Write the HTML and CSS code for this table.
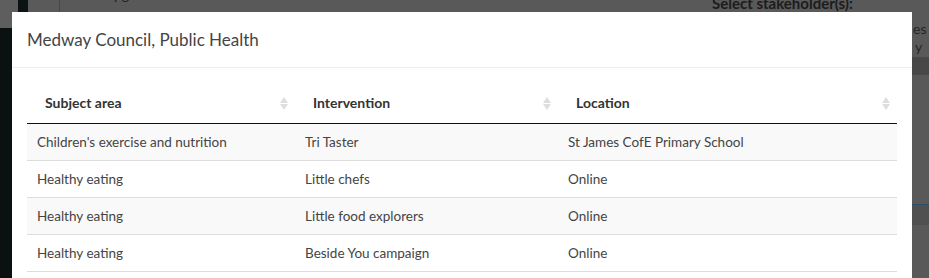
FILE: index.html
```html
<!DOCTYPE html>
<html lang="en">
<head>
<meta charset="utf-8">
<title>Medway Council, Public Health</title>
<link rel="stylesheet" href="styles.css">
</head>
<body>
<div class="page">
  <div class="top-strip">
    <span class="seg seg-a"></span>
    <span class="seg seg-b"></span>
    <span class="seg seg-c"></span>
    <span class="seg seg-line"></span>
    <span class="seg seg-d"><span class="frag-pg">pg</span><span class="frag-med">Med</span></span>
  </div>
  <div class="left-dark"></div>
  <div class="bg-label">Select stakeholder(s):</div>
  <div class="right-bits">
    <span class="frag-es">es</span>
    <span class="frag-y">y</span>
    <span class="band band-1"></span>
    <span class="band-line"></span>
    <span class="band band-2"></span>
  </div>
</div>

<div class="modal">
  <div class="modal-header">
    <h4 class="modal-title">Medway Council, Public Health</h4>
  </div>
  <div class="modal-body">
    <table class="data-table">
      <colgroup>
        <col class="col-subject">
        <col class="col-intervention">
        <col class="col-location">
      </colgroup>
      <thead>
        <tr>
          <th class="sortable">Subject area</th>
          <th class="sortable">Intervention</th>
          <th class="sortable">Location</th>
        </tr>
      </thead>
      <tbody>
        <tr class="odd"><td>Children's exercise and nutrition</td><td>Tri Taster</td><td>St James CofE Primary School</td></tr>
        <tr class="even"><td>Healthy eating</td><td>Little chefs</td><td>Online</td></tr>
        <tr class="odd"><td>Healthy eating</td><td>Little food explorers</td><td>Online</td></tr>
        <tr class="even"><td>Healthy eating</td><td>Beside You campaign</td><td>Online</td></tr>
      </tbody>
    </table>
  </div>
</div>
</body>
</html>
```

FILE: styles.css
```css
html, body {
  margin: 0;
  padding: 0;
}

body {
  width: 929px;
  height: 278px;
  overflow: hidden;
  position: relative;
  background: #595959;
  font-family: "Lato", "Liberation Sans", sans-serif;
  color: #333;
}

/* ----- dimmed page underneath the modal ----- */
.page {
  position: absolute;
  inset: 0;
}

.top-strip {
  display: flex;
  height: 28px;
}

.seg { display: block; height: 28px; }
.seg-a { width: 18px; background: #5e5e5e; }
.seg-b { width: 10px; background: #0d1312; }
.seg-c { width: 31px; background: #5a5a5a; }
.seg-line { width: 1px; background: #474747; height: 12px; }
.seg-d { flex: 1; background: #595959; position: relative; font-size: 14px; color: #222; }

.frag-pg {
  position: absolute;
  left: 54px;
  top: -14px;
}
.frag-med {
  position: absolute;
  left: 25px;
  top: 8px;
}

.left-dark {
  width: 12px;
  height: 250px;
  background: #0b1110;
}

.bg-label {
  position: absolute;
  left: 712px;
  top: -6px;
  font-size: 15px;
  font-weight: 700;
  color: #1c1c1c;
}

.right-bits {
  position: absolute;
  left: 912px;
  top: 0;
  width: 17px;
  height: 278px;
  font-size: 14px;
  color: #262626;
}
.frag-es { position: absolute; left: 1px; top: 20px; }
.frag-y { position: absolute; left: 3px; top: 38px; }
.band { position: absolute; left: 0; right: 0; background: #484848; }
.band-1 { top: 57px; height: 18px; }
.band-line { position: absolute; left: 0; right: 0; top: 204px; height: 1px; background: #2b4e66; }
.band-2 { top: 205px; height: 20px; background: #505050; }

/* ----- modal ----- */
.modal {
  position: absolute;
  left: 12px;
  top: 12px;
  width: 900px;
  height: 266px;
  overflow: hidden;
  background: #fff;
}

.modal-header {
  padding: 15px;
  border-bottom: 1px solid #ececec;
}

.modal-title {
  margin: 0;
  font-size: 17px;
  line-height: 25px;
  font-weight: 400;
  color: #444;
}

.modal-body {
  padding: 15px;
}

.data-table {
  width: 870px;
  border-collapse: collapse;
  table-layout: fixed;
  font-size: 13.5px;
  line-height: 20px;
}

.col-subject { width: 268px; }
.col-intervention { width: 263px; }
.col-location { width: 339px; }

.data-table th {
  position: relative;
  text-align: left;
  font-weight: 700;
  font-size: 14px;
  color: #333;
  padding: 10px 18px;
  border-bottom: 1px solid #111;
}

.sortable::before,
.sortable::after {
  content: "";
  position: absolute;
  right: 7px;
  width: 0;
  height: 0;
  border-left: 4px solid transparent;
  border-right: 4px solid transparent;
}
.sortable::before {
  top: 14px;
  border-bottom: 6px solid #dedede;
}
.sortable::after {
  top: 21px;
  border-top: 6px solid #dedede;
}

.data-table td {
  padding: 8px 10px;
  color: #444;
  border-top: 1px solid #ddd;
  border-bottom: 1px solid #ddd;
  white-space: nowrap;
}

.data-table tbody tr:first-child td {
  border-top: none;
}

.data-table tr.odd td {
  background: #f9f9f9;
}
.data-table tr.even td {
  background: #fff;
}
```
